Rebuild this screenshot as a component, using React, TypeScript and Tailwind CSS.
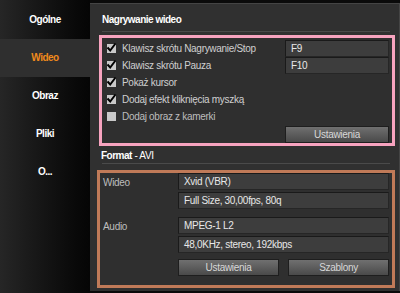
const font = "font-['Liberation_Sans',Arial,sans-serif]";

const tabs = ["Ogólne", "Wideo", "Obraz", "Pliki", "O..."];

function Check({ on }: { on: boolean }) {
  return (
    <span className="relative w-[9px] h-[9px] bg-[#c9c9c9] shrink-0">
      {on && (
        <svg
          className="absolute left-[-1px] top-[-2px]"
          width="11"
          height="11"
          viewBox="0 0 11 11"
        >
          <path d="M1.5 5.5 L4.2 8.5 L9.5 1.5" stroke="#000" strokeWidth="2" fill="none" />
        </svg>
      )}
    </span>
  );
}

function Field({ children }: { children: React.ReactNode }) {
  return (
    <div className="h-[17px] flex items-center px-[5px] bg-[#3d3d3d] border-t border-l border-[#1a1a1a] border-r border-r-[#262626] border-b border-b-[#262626] text-[#e8e8e8] whitespace-nowrap">
      {children}
    </div>
  );
}

function Btn({ children }: { children: React.ReactNode }) {
  return (
    <div className="h-[17px] flex items-center justify-center bg-gradient-to-b from-[#707070] to-[#4a4a4a] border border-[#1e1e1e] text-[#d8d8d8]">
      {children}
    </div>
  );
}

export default function App() {
  const rows = [
    { label: "Klawisz skrótu Nagrywanie/Stop", on: true, key: "F9" },
    { label: "Klawisz skrótu Pauza", on: true, key: "F10" },
    { label: "Pokaż kursor", on: true },
    { label: "Dodaj efekt kliknięcia myszką", on: true },
    { label: "Dodaj obraz z kamerki", on: false },
  ];

  return (
    <div className={`w-[400px] h-[293px] flex bg-[#0a0a0a] text-[10px] leading-none tracking-[-0.3px] ${font}`}>
      <div className="w-[90px] shrink-0 flex flex-col pt-[1px] bg-gradient-to-r from-[#262626] to-[#050505]">
        {tabs.map((t) => (
          <div
            key={t}
            className={
              t === "Wideo"
                ? "h-[38px] flex items-center justify-center font-bold tracking-[-0.5px] text-[#f08a1c] bg-[#2f2f2f]"
                : "h-[38px] flex items-center justify-center font-bold tracking-[-0.5px] text-white"
            }
          >
            {t}
          </div>
        ))}
      </div>

      <div className="flex-1 mt-[3px] mb-[2px] bg-[#303030] border-t border-r border-[#444] flex flex-col pl-[9px] pr-[4px]">
        <div className="h-[27px] flex items-center pl-[3px] pt-[5px] font-bold tracking-[-0.5px] text-white">
          Nagrywanie wideo
        </div>
        <div className="h-px bg-[#4a4a4a] ml-[3px] mr-[5px]" />

        <div className="mt-[3px] h-[111px] border-[3px] border-[#f7a3bf] bg-[#2f2f2f] flex flex-col pt-[2px] pl-[2px] pr-[3px]">
          {rows.map((r) => (
            <div key={r.label} className="h-[17px] flex items-center">
              <div className="flex-1 flex items-center gap-[6px] pl-[3px] text-[#cfcfcf] whitespace-nowrap">
                <Check on={r.on} />
                <span className={r.on ? "" : "text-[#bdbdbd]"}>{r.label}</span>
              </div>
              {r.key && (
                <div className="w-[104px]">
                  <Field>{r.key}</Field>
                </div>
              )}
            </div>
          ))}
          <div className="flex justify-end mt-[1px]">
            <div className="w-[104px]">
              <Btn>Ustawienia</Btn>
            </div>
          </div>
        </div>

        <div className="h-[15px] mt-[2px] flex items-center pl-[2px] text-white">
          <span className="font-bold tracking-[-0.5px]">Format</span>
          <span>&nbsp;- AVI</span>
        </div>
        <div className="h-px bg-[#4a4a4a] ml-[3px] mr-[5px]" />

        <div className="mt-[6px] -ml-[2px] h-[118px] border-[3px] border-[#c07a58] bg-[#2f2f2f] flex flex-col pr-[3px]">
          <div className="flex">
            <div className="w-[78px] pl-[3px] pt-[5px] text-[#bdbdbd]">Wideo</div>
            <div className="flex-1 flex flex-col gap-[2px]">
              <Field>Xvid (VBR)</Field>
              <Field>Full Size, 30,00fps, 80q</Field>
            </div>
          </div>
          <div className="flex mt-[8px]">
            <div className="w-[78px] pl-[3px] pt-[5px] text-[#bdbdbd]">Audio</div>
            <div className="flex-1 flex flex-col gap-[2px]">
              <Field>MPEG-1 L2</Field>
              <Field>48,0KHz, stereo, 192kbps</Field>
            </div>
          </div>
          <div className="flex mt-[6px] ml-[78px] gap-[9px]">
            <div className="flex-1">
              <Btn>Ustawienia</Btn>
            </div>
            <div className="flex-1">
              <Btn>Szablony</Btn>
            </div>
          </div>
        </div>
      </div>
    </div>
  );
}
